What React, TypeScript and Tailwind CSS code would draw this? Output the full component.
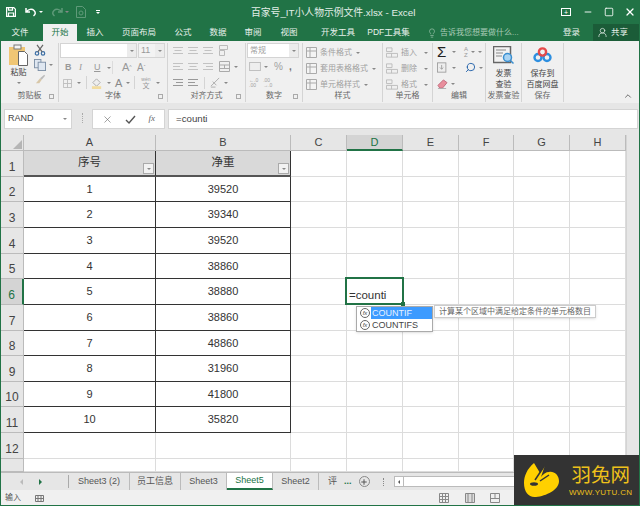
import type { ReactNode } from 'react';
import {
  ChevronUp,
  Lightbulb,
  Minus,
  Plus,
  Search,
  Square,
  UserRound,
  X,
} from 'lucide-react';

const FONT = '[font-family:"Liberation_Sans","Noto_Sans_CJK_SC",sans-serif]';

const columns = ['A', 'B', 'C', 'D', 'E', 'F', 'G', 'H'];
const colWidths = [132, 135, 56, 56, 56, 55, 56, 56];
const rowHeights = [26, 25, 26, 26, 25, 26, 26, 25, 26, 25, 26, 26, 13];
const weights = [39520, 39340, 39520, 38860, 38880, 38860, 48860, 31960, 41800, 35820];

function Arrow({ className = '' }: { className?: string }) {
  return <span className={`inline-block shrink-0 border-x-[2px] border-t-[2px] border-x-transparent border-t-[#888] ${className}`} />;
}

function Group({
  width,
  label,
  launcher = false,
  children,
}: {
  width: number;
  label: string;
  launcher?: boolean;
  children: ReactNode;
}) {
  return (
    <div style={{ width }} className="relative flex h-full shrink-0 flex-col border-r border-[#d4d4d4]">
      <div className="h-[48px] overflow-hidden">{children}</div>
      <div className="mt-auto mb-[1px] text-center text-[8px] leading-[11px] whitespace-nowrap text-[#666]">{label}</div>
      {launcher && <span className="absolute right-[4px] bottom-[3px] size-[5px] border border-[#aaa]" />}
    </div>
  );
}

function Row({ children, className = '' }: { children: ReactNode; className?: string }) {
  return <div className={`flex h-[15px] items-center ${className}`}>{children}</div>;
}

function Clipboard() {
  return (
    <div className="flex h-full pl-[8px]">
      <div className="flex w-[19px] flex-col items-center">
        <svg width="19" height="22" viewBox="0 0 19 22" className="mt-[1px]">
          <rect x="0" y="3" width="16" height="18" fill="#f0c674" />
          <rect x="5" y="1" width="7" height="4" fill="#f4f4f4" stroke="#777" />
          <path d="M9.500 7.500h6l3 3v11h-9z" fill="#fff" stroke="#666" />
        </svg>
        <span className="mt-[1px] text-[8px] leading-[12px] text-[#444]">粘贴</span>
        <Arrow className="mt-[3px] border-t-[#555]" />
      </div>
      <div className="ml-[6px] flex flex-col gap-[3px] pt-[1px]">
        <svg width="12" height="12" viewBox="0 0 14 14" fill="none" stroke="#3c6fa5" strokeWidth="1.400">
          <circle cx="3.500" cy="11" r="2" />
          <circle cx="10.500" cy="11" r="2" />
          <path d="M4.500 9.200 10.500 1M9.500 9.200 3.500 1" stroke="#666" />
        </svg>
        <div className="flex items-center gap-[3px]">
          <svg width="12" height="12" viewBox="0 0 13 13" fill="#dfe7f1" stroke="#7c8fa6">
            <rect x="0.500" y="0.500" width="7" height="9" />
            <rect x="4.500" y="3.500" width="8" height="9" />
          </svg>
          <Arrow className="border-t-[#555]" />
        </div>
        <svg width="11" height="10" viewBox="0 0 13 12" className="ml-[1px]">
          <path d="M1 11 6 5l2 2-3 4z" fill="#d8c7a8" />
          <path d="m6 5 5-4 1 1-4 5z" fill="#bbb" />
        </svg>
      </div>
    </div>
  );
}

function FontGroup() {
  return (
    <div className="flex flex-col pl-[1px] pt-[0px] text-[#999]">
      <Row className="gap-[1px]">
        <div className="flex h-[15px] w-[77px] justify-end border border-[#d4d4d4] bg-white">
          <span className="flex w-[9px] items-center justify-center bg-[#ececec]"><Arrow /></span>
        </div>
        <div className="flex h-[15px] w-[27px] items-center justify-between border border-[#d4d4d4] bg-[#f3f3f3] pl-[2px] text-[9px]">
          11
          <span className="flex h-full w-[9px] items-center justify-center bg-[#ececec]"><Arrow /></span>
        </div>
      </Row>
      <Row className="mt-[2px] pl-[5px] text-[9px]">
        <b className="w-[14px]">B</b>
        <i className="w-[15px] [font-family:'Liberation_Serif',serif]">I</i>
        <span className="flex w-[18px] items-center gap-[6px] underline">U<Arrow /></span>
        <span className="mr-[9px] h-[13px] w-px bg-[#dcdcdc]" />
        <span className="w-[15px] text-[11px]">A<sup className="text-[5px]">^</sup></span>
        <span className="text-[10px]">A<sup className="text-[5px]">ˇ</sup></span>
      </Row>
      <Row className="mt-[0px] pl-[3px]">
        <svg width="9" height="9" viewBox="0 0 10 10" fill="none" stroke="#bbb" className="mt-[1px]">
          <path d="M.5.500h9v9h-9zM5 .500v9M.5 5h9" />
        </svg>
        <Arrow className="ml-[5px]" />
        <span className="ml-[5px] h-[13px] w-px bg-[#d4d4d4]" />
        <svg width="12" height="12" viewBox="0 0 13 13" className="ml-[4px]">
          <path d="m2 6 4-4 4 4-4 4z" fill="#eee" stroke="#aaa" />
          <rect x="1" y="10" width="10" height="3" fill="#f2dca0" />
        </svg>
        <Arrow className="ml-[4px]" />
        <span className="ml-[4px] text-[11px] leading-[12px] text-[#888]">A</span>
        <Arrow className="ml-[4px]" />
        <span className="ml-[4px] h-[13px] w-px bg-[#d4d4d4]" />
        <span className="ml-[6px] flex flex-col items-center text-[5px] leading-[5px]">wén<span className="text-[7px] leading-[7px]">文</span></span>
        <Arrow className="ml-[5px] border-t-[#444]" />
      </Row>
    </div>
  );
}

function Lines({ align = 'left', dark = false }: { align?: 'left' | 'center' | 'right'; dark?: boolean }) {
  const d = {
    left: 'M0 1.500h10M0 4.500h7M0 7.500h10',
    center: 'M0 1.500h10M1.500 4.500h7M0 7.500h10',
    right: 'M0 1.500h10M3 4.500h7M0 7.500h10',
  }[align];
  return (
    <svg width="10" height="9" viewBox="0 0 10 9" stroke={dark ? '#999' : '#c2c2c2'} className="shrink-0">
      <path d={d} />
    </svg>
  );
}

function AlignGroup() {
  return (
    <div className="flex flex-col pl-[5px] pt-[0px] text-[#a5a5a5]">
      <Row className="gap-[5px]">
        <Lines align="center" />
        <Lines align="center" />
        <Lines align="center" />
        <svg width="11" height="11" viewBox="0 0 11 11" fill="none" stroke="#bbb" className="ml-[1px]"><path d="M.5.500h8v4h-8zM.5 5.500h5v5h-5z" /></svg>
      </Row>
      <Row className="mt-[1px] gap-[5px]">
        <Lines align="left" />
        <Lines align="center" />
        <Lines align="right" />
        <svg width="11" height="11" viewBox="0 0 11 11" fill="none" stroke="#aaa" className="ml-[1px]"><path d="M.5.500h10v10H.5zM.5 4h10M.5 7.500h10M5.500 4v3.500" /></svg>
        <Arrow className="-ml-[1px]" />
      </Row>
      <Row className="mt-[1px] gap-[5px]">
        <Lines align="right" dark />
        <Lines align="left" dark />
        <span className="ml-[1px] h-[12px] w-px bg-[#d4d4d4]" />
        <svg width="11" height="11" viewBox="0 0 12 12" fill="none" stroke="#aaa"><path d="m1 10 9-9M3 5l4 4M1 11h5" /></svg>
        <Arrow className="-ml-[2px]" />
      </Row>
    </div>
  );
}

function NumberGroup() {
  return (
    <div className="flex flex-col pl-[1px] text-[#a0a0a0]">
      <div className="flex h-[15px] w-[52px] items-center justify-between border border-[#d4d4d4] bg-white pl-[2px] text-[8px]">
        常规
        <span className="flex h-full w-[9px] items-center justify-center bg-[#ececec]"><Arrow /></span>
      </div>
      <Row className="mt-[1px] pl-[2px] text-[10px]">
        <svg width="12" height="9" viewBox="0 0 13 10" fill="#eee" stroke="#bbb"><rect x="0.500" y="0.500" width="12" height="9" /></svg>
        <Arrow className="ml-[3px]" />
        <span className="ml-[6px]">%</span>
        <b className="ml-[6px] text-[#777]">,</b>
      </Row>
      <Row className="mt-[1px] gap-[5px] pl-[2px] text-[5px] leading-[5px]">
        <span>←.0<br />.00</span>
        <span>.00<br />→.0</span>
      </Row>
    </div>
  );
}

function StyleGroup() {
  const items = ['条件格式', '套用表格格式', '单元格样式'];
  return (
    <div className="flex flex-col gap-[1px] pl-[3px] pt-[2px] text-[8px] text-[#a0a0a0]">
      {items.map((item) => (
        <Row key={item} className="gap-[2px]">
          <svg width="11" height="11" viewBox="0 0 11 11" fill="#f4f4f4" stroke="#aaa" className="mr-[1px]"><path d="M.5.500h10v10H.5zM.5 4h10M4 .500v10" /></svg>
          <span className="whitespace-nowrap">{item}</span>
          <Arrow className="ml-[2px]" />
        </Row>
      ))}
    </div>
  );
}

function CellsGroup() {
  return (
    <div className="flex flex-col gap-[1px] pl-[3px] pt-[2px] text-[8px] text-[#a0a0a0]">
      {['插入', '删除', '格式'].map((item) => (
        <Row key={item} className="gap-[3px]">
          <svg width="12" height="11" viewBox="0 0 13 11" fill="none" stroke="#bbb"><path d="M.5.500h6v4h-6zM.5 6.500h12v4H.5zM6 6.500v4" /></svg>
          <span>{item}</span>
          <Arrow className="ml-[4px]" />
        </Row>
      ))}
    </div>
  );
}

function EditGroup() {
  return (
    <div className="flex flex-col gap-[1px] pl-[4px] pt-[1px] text-[#999]">
      <Row className="gap-[3px]">
        <span className="w-[12px] text-[15px] leading-[15px] text-[#222]">Σ</span>
        <Arrow className="border-t-[#333]" />
        <span className="ml-[5px] text-[6px] leading-[6px]">A<br />Z</span>
        <Arrow />
        <Arrow />
      </Row>
      <Row className="gap-[3px]">
        <svg width="11" height="11" viewBox="0 0 13 12" fill="#eee" stroke="#999"><rect x="0.500" y="0.500" width="10" height="11" /><path d="M5.500 3v5M3.500 6l2 2 2-2" fill="none" /></svg>
        <Arrow className="ml-[1px]" />
        <Search size={11} strokeWidth={2} className="ml-[6px] -scale-x-100 text-[#1f5fa8]" />
        <Arrow className="border-t-[#333]" />
      </Row>
      <Row className="gap-[3px]">
        <svg width="11" height="10" viewBox="0 0 12 11"><path d="m1 7 6-6 4 3-5 6H3z" fill="#e98f9d" stroke="#c0687a" /><path d="M1 10.500h9" stroke="#aaa" /></svg>
        <Arrow className="border-t-[#333]" />
      </Row>
    </div>
  );
}

function InvoiceGroup() {
  return (
    <div className="flex flex-col items-center pt-[3px] text-[8px] leading-[11px] text-[#444]">
      <svg width="21" height="18" viewBox="0 0 21 18">
        <rect x="0.500" y="0.500" width="17" height="16" fill="#f2f2f2" stroke="#666" strokeWidth="1.500" />
        <path d="M3 4h10M3 7h7M3 10h6" stroke="#888" />
        <circle cx="14.500" cy="11.500" r="4" fill="#a9d3f2" stroke="#3a8fd0" strokeWidth="1.500" />
        <path d="m17.500 14.500 3 3" stroke="#3a8fd0" strokeWidth="1.500" />
      </svg>
      <span className="mt-[4px]">发票</span>
      <span>查验</span>
    </div>
  );
}

function SaveGroup() {
  return (
    <div className="flex flex-col items-center pt-[4px] text-[8px] leading-[11px] text-[#444]">
      <svg width="19" height="16" viewBox="0 0 19 16" fill="none" strokeWidth="2.400">
        <circle cx="5" cy="10.500" r="3.500" stroke="#2d8fe0" />
        <circle cx="14" cy="10.500" r="3.500" stroke="#2d8fe0" />
        <circle cx="9.500" cy="5" r="3.600" stroke="#e64a4a" />
      </svg>
      <span className="mt-[5px]">保存到</span>
      <span className="whitespace-nowrap">百度网盘</span>
    </div>
  );
}

function TitleBar() {
  return (
    <div className="relative flex h-[24px] items-center pl-[5px] text-white">
      <svg width="10" height="10" viewBox="0 0 10 10" fill="none" stroke="#fff" strokeWidth="1.200">
        <path d="M.6.600h7.200l1.600 1.600v7.200H.6zM2.500.6v2.600h4V.6M2.500 9.400V6h5v3.400" />
      </svg>
      <svg width="12" height="10" viewBox="0 0 12 10" fill="none" stroke="#fff" strokeWidth="1.500" className="ml-[9px]">
        <path d="M1 1v4h4M1.500 5C3 2 7 1.500 9 3.500s1.500 4-0.500 5.500" />
      </svg>
      <Arrow className="ml-[2px] border-t-white" />
      <svg width="12" height="10" viewBox="0 0 12 10" fill="none" stroke="#5f9a79" strokeWidth="1.500" className="ml-[8px]">
        <path d="M11 1v4H7M10.500 5C9 2 5 1.500 3 3.500S1.500 7.500 3.500 9" />
      </svg>
      <Arrow className="ml-[2px] border-t-[#5f9a79]" />
      <svg width="11" height="12" viewBox="0 0 11 12" fill="none" stroke="#5f9a79" className="ml-[7px]">
        <path d="M.5.500h6l3 3v8h-9z" />
        <circle cx="5" cy="7" r="2" />
      </svg>
      <span className="ml-[9px] flex flex-col items-center gap-[1px]">
        <span className="h-px w-[4px] bg-white" />
        <Arrow className="border-t-white" />
      </span>
      <span className="absolute left-[250px] top-[6px] text-[9.800px] leading-[13px] whitespace-nowrap text-[#e3eee8]">
        百家号_IT小人物示例文件.xlsx - Excel
      </span>
      <div className="ml-auto flex items-center gap-[9px] pr-[3px]">
        <span className="flex h-[8px] w-[10px] items-center justify-center border border-white text-[7px] leading-none">+</span>
        <Minus size={10} strokeWidth={2.200} className="ml-[3px]" />
        <Square size={10} strokeWidth={2} className="ml-[2px]" />
        <X size={12} strokeWidth={2.500} className="ml-[1px]" />
      </div>
    </div>
  );
}

function TabBar() {
  const tabs: [string, number][] = [
    ['插入', 36],
    ['页面布局', 52],
    ['公式', 36],
    ['数据', 34],
    ['审阅', 36],
    ['视图', 36],
    ['开发工具', 62],
    ['PDF工具集', 39],
  ];
  return (
    <div className="flex h-[17px] items-end text-[8.500px] text-[#e8f1ec]">
      <span className="flex h-[17px] w-[42px] items-center justify-center pr-[4px]">文件</span>
      <span className="flex h-[17px] w-[34px] items-center justify-center bg-[#f0f0f0] text-[#217346]">开始</span>
      <div className="flex h-[17px] items-center">
        {tabs.map(([name, width]) => (
          <span key={name} style={{ width }} className="flex justify-center whitespace-nowrap">{name}</span>
        ))}
      </div>
      <span className="flex h-[17px] items-center gap-[3px] pl-[19px] text-[8px] text-[#a9cbb7]">
        <Lightbulb size={10} strokeWidth={1.500} />
        告诉我您想要做什么...
      </span>
      <span className="ml-auto flex h-[17px] items-center pr-[13px]">登录</span>
      <span className="flex h-[17px] w-[46px] items-center gap-[3px] bg-[#1b5c38] pl-[4px]">
        <UserRound size={11} strokeWidth={1.500} />
        共享
      </span>
    </div>
  );
}

function Ribbon() {
  return (
    <div className="relative flex h-[62px] bg-[#f0f0f0] pt-[2px] pb-[1px]">
      <Group width={58} label="剪贴板" launcher><Clipboard /></Group>
      <Group width={109} label="字体" launcher><FontGroup /></Group>
      <Group width={78} label="对齐方式" launcher><AlignGroup /></Group>
      <Group width={57} label="数字" launcher><NumberGroup /></Group>
      <Group width={80} label="样式"><StyleGroup /></Group>
      <Group width={50} label="单元格"><CellsGroup /></Group>
      <Group width={53} label="编辑"><EditGroup /></Group>
      <Group width={36} label="发票查验"><InvoiceGroup /></Group>
      <Group width={42} label="保存"><SaveGroup /></Group>
      <ChevronUp size={10} strokeWidth={2} className="absolute right-[6px] bottom-[2px] text-[#555]" />
    </div>
  );
}

function FormulaBar() {
  return (
    <div className="flex h-[32px] items-start bg-[#e6e6e6] pt-[6px] text-[#444]">
      <div className="ml-[3px] flex h-[20px] w-[68px] items-center justify-between border border-[#d4d4d4] bg-white pr-[4px] pl-[3px] text-[9px]">
        RAND
        <Arrow className="border-t-[#555]" />
      </div>
      <span className="mt-[4px] mr-[9px] ml-[10px] h-[10px] border-l border-dotted border-[#aaa]" />
      <div className="flex h-[20px] w-[73px] items-center justify-around border border-[#d4d4d4] bg-white px-[3px] text-[#666]">
        <X size={11} strokeWidth={1.300} />
        <svg width="11" height="9" viewBox="0 0 11 9" fill="none" stroke="#555" strokeWidth="1.400"><path d="m1 5 3 3 6-7" /></svg>
        <i className="[font-family:'Liberation_Serif',serif] text-[9px]">fx</i>
      </div>
      <div className="mr-[1px] ml-[3px] flex h-[20px] flex-1 items-center border border-[#d4d4d4] bg-white pl-[7px] text-[9.700px]">=counti</div>
    </div>
  );
}

function Sheet() {
  return (
    <div className="relative flex h-[337px] overflow-hidden bg-white">
      <div className="w-[625px] shrink-0">
        <div className="flex h-[16px] bg-[#e6e6e6] text-[11px] text-[#444]">
          <div className="flex w-[23px] shrink-0 items-end justify-end border-r border-b border-[#bbb] p-[1px]">
            <span className="size-0 border-b-[9px] border-l-[9px] border-b-[#b5b5b5] border-l-transparent" />
          </div>
          {columns.map((col, i) => (
            <div
              key={col}
              style={{ width: colWidths[i] }}
              className={`flex shrink-0 items-center justify-center border-r border-b border-[#bbb] ${
                col === 'D' ? 'border-b-2 border-b-[#217346] bg-[#d4d4d4] text-[#217346]' : ''
              }`}
            >
              {col}
            </div>
          ))}
        </div>
        {rowHeights.map((height, r) => (
          <div key={r} style={{ height }} className="flex">
            <div
              className={`flex w-[23px] shrink-0 items-end justify-center border-r border-b border-[#bbb] pb-[1px] text-[12px] leading-[15px] text-[#444] ${
                r === 5 ? 'border-r-2 border-r-[#217346] bg-[#d4d4d4] text-[#217346]' : 'bg-[#e6e6e6]'
              }`}
            >
              {r < 12 ? r + 1 : ''}
            </div>
            {columns.map((col, c) => {
              const inTable = c < 2 && r < 11;
              return (
                <div
                  key={col}
                  style={{ width: colWidths[c] }}
                  className={`relative flex shrink-0 items-center justify-center text-[11px] text-[#333] ${
                    inTable
                      ? 'border-r border-b border-[#333]'
                      : 'border-r border-b border-[#dcdcdc]'
                  } ${inTable && r === 0 ? 'border-b-2 border-b-[#555] bg-[#d9d9d9]' : ''}`}
                >
                  {inTable && r === 0 && (
                    <>
                      <span className="text-[11.500px]">{c === 0 ? '序号' : '净重'}</span>
                      <span className="absolute right-[1px] bottom-[1px] flex size-[11px] items-center justify-center border border-[#aaa] bg-[#f2f2f2]">
                        <Arrow className="border-t-[#444]" />
                      </span>
                    </>
                  )}
                  {inTable && r > 0 && (c === 0 ? r : weights[r - 1])}
                </div>
              );
            })}
          </div>
        ))}
      </div>
      <div className="flex flex-1 flex-col border-l border-[#d4d4d4] bg-[#e6e6e6]" />

      <div className="absolute top-[142px] left-[344px] flex h-[28px] w-[59px] items-end border-2 border-[#217346] bg-white pl-[2px] text-[11.500px] leading-[15px] text-[#333]">
        =counti
        <span className="absolute -right-[3px] -bottom-[3px] size-[4px] bg-[#217346]" />
      </div>
      <div className="absolute top-[171px] left-[355px] w-[77px] border border-[#aaa] bg-white text-[9px] leading-[12px] text-[#444] shadow-sm">
        {['COUNTIF', 'COUNTIFS'].map((fn, i) => (
          <div key={fn} className="flex items-center gap-[1px] pl-[3px]">
            <span className="flex size-[10px] items-center justify-center rounded-full border border-[#666] text-[6px] leading-none italic">
              fx
            </span>
            <span className={`flex-1 pl-[1px] ${i === 0 ? 'bg-[#3d9bff] text-[#e8f2ff]' : ''}`}>{fn}</span>
          </div>
        ))}
      </div>
      <div className="absolute top-[170px] left-[433px] whitespace-nowrap border border-[#ccc] bg-white px-[4px] text-[8px] leading-[11px] text-[#666] shadow-sm">
        计算某个区域中满足给定条件的单元格数目
      </div>
    </div>
  );
}

function SheetTabs() {
  const tabs: [string, number, boolean][] = [
    ['Sheet3 (2)', 61, false],
    ['员工信息', 51, false],
    ['Sheet3', 46, false],
    ['Sheet5', 46, true],
    ['Sheet2', 46, false],
  ];
  return (
    <div className="flex h-[18px] items-center border-t border-[#bbb] bg-[#e6e6e6] text-[9px] text-[#555]">
      <span className="ml-[19px] size-0 border-y-[3px] border-r-[3px] border-y-transparent border-r-[#bbb]" />
      <span className="ml-[16px] size-0 border-y-[3px] border-l-[3px] border-y-transparent border-l-[#217346]" />
      <span className="ml-[26px] h-[13px] w-px bg-[#aaa]" />
      {tabs.map(([name, width, active]) => (
        <span
          key={name}
          style={{ width }}
          className={`flex h-[17px] items-center justify-center border-r border-[#bbb] ${
            active ? 'border-b-2 border-b-[#217346] bg-white text-[#217346]' : ''
          }`}
        >
          {name}
        </span>
      ))}
      <span className="ml-[9px] w-[10px] overflow-hidden whitespace-nowrap">评</span>
      <span className="ml-[6px] font-bold text-[#217346]">...</span>
      <span className="ml-[7px] flex size-[11px] items-center justify-center rounded-full border border-[#888]">
        <Plus size={8} strokeWidth={3} />
      </span>
      <span className="ml-[13px] h-[8px] border-l border-dotted border-[#888]" />
      <div className="ml-[10px] flex h-[11px] flex-1 items-center border border-[#bbb] bg-white">
        <span className="flex h-full w-[9px] items-center justify-center border-r border-[#bbb]">
          <span className="size-0 border-y-[2px] border-r-[2px] border-y-transparent border-r-[#555]" />
        </span>
      </div>
    </div>
  );
}

function StatusBar() {
  return (
    <div className="flex h-[15px] items-center bg-[#f0f0f0] pl-[4px] text-[8px] text-[#555]">
      输入
      <svg width="9" height="9" viewBox="0 0 9 9" fill="none" stroke="#777" className="ml-[14px]">
        <path d="M.5 2.500h8v6h-8zM3 2.500v6M6 2.500v6M.5 5.500h8" />
      </svg>
      <svg width="10" height="10" viewBox="0 0 10 10" fill="none" stroke="#888" className="ml-[395px]">
        <path d="M.5.500h9v9h-9zM3.500.500v9M6.500.500v9M.5 3.500h9M.5 6.500h9" />
      </svg>
      <svg width="10" height="10" viewBox="0 0 10 10" fill="#ddd" stroke="#888" className="ml-[16px]">
        <path d="M.5.500h9v9h-9zM3 .500v9M7 .500v9" />
      </svg>
      <svg width="10" height="10" viewBox="0 0 10 10" fill="none" stroke="#888" className="ml-[15px]">
        <path d="M.5.500h9v9h-9zM5 .500v5M.5 5.500h9" />
      </svg>
    </div>
  );
}

function Watermark() {
  return (
    <div className="absolute -right-px -bottom-px flex h-[51px] w-[126px] items-center bg-[#333333]">
      <svg width="35" height="35" viewBox="0 0 35 35" className="ml-[10px] shrink-0">
        <path d="M10 0C3 6 0 13 0 20c0 9 5 15 12 14 10-1 23-7 23-16 0-6-5-10-10-9-3 0-6 2-8 5L21 2l-5 8z" fill="#ffd000" />
        <path d="m11 17 10-15" stroke="#333" strokeWidth="1.500" />
        <path d="m16 18 9-6" stroke="#333" strokeWidth="1.500" />
        <ellipse cx="10" cy="21" rx="4" ry="1.800" fill="#333" />
      </svg>
      <div className="ml-[10px] flex flex-col items-center text-[#eec11a]">
        <span className="text-[19.500px] leading-[22px] whitespace-nowrap">羽兔网</span>
        <span className="mt-[3px] text-[8px] leading-[8px] tracking-[.3px]">WWW.YUTU.CN</span>
      </div>
    </div>
  );
}

export default function App() {
  return (
    <div className={`relative h-[506px] w-[640px] overflow-hidden border-x border-b border-[#217346] bg-[#217346] ${FONT}`}>
      <TitleBar />
      <TabBar />
      <Ribbon />
      <FormulaBar />
      <Sheet />
      <SheetTabs />
      <StatusBar />
      <Watermark />
    </div>
  );
}
